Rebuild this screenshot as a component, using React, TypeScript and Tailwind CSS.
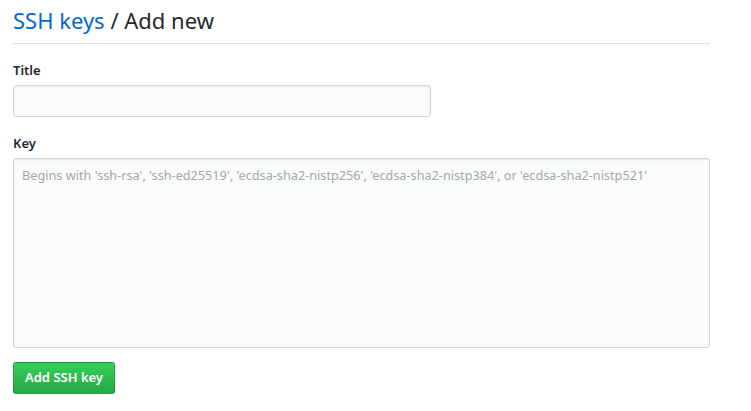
export default function App() {
  return (
    <div className="min-h-[411px] w-[751px] bg-white px-[13px] text-[#24292e]" style={{ fontFamily: '"Noto Sans", "Open Sans", sans-serif' }}>
      <div className="w-[697px]">
        {/* Header */}
        <h2 className="border-b border-[#dfe2e5] pt-[5px] pb-[8px] text-[22px] leading-[30px] font-normal">
          <a href="#" className="text-[#0366d6]">SSH keys</a> / Add new
        </h2>

        <form className="pt-[17px]">
          <div>
            <label htmlFor="title" className="block text-[13px] leading-[18px] font-semibold">Title</label>
            <input
              id="title"
              type="text"
              className="mt-[6px] block h-[32px] w-[418px] rounded-[3px] border border-[#d1d5da] bg-[#fafbfc] px-2 text-[13px] shadow-[inset_0_1px_2px_rgba(27,31,35,0.075)] outline-none"
            />
          </div>

          <div className="mt-[17px]">
            <label htmlFor="key" className="block text-[13px] leading-[18px] font-semibold">Key</label>
            <textarea
              id="key"
              placeholder="Begins with 'ssh-rsa', 'ssh-ed25519', 'ecdsa-sha2-nistp256', 'ecdsa-sha2-nistp384', or 'ecdsa-sha2-nistp521'"
              className="mt-[6px] block h-[190px] w-[697px] resize-none rounded-[3px] border border-[#d1d5da] bg-[#fafbfc] px-2 py-[6px] text-[12.7px] leading-[20px] shadow-[inset_0_1px_2px_rgba(27,31,35,0.075)] outline-none placeholder:text-[#a3a8ae]"
            />
          </div>

          <button
            type="button"
            className="mt-[14px] h-[32px] w-[102px] rounded-[3px] border border-[rgba(27,31,35,0.2)] bg-gradient-to-b from-[#34d058] to-[#28a745] text-[13px] font-semibold text-white"
          >
            Add SSH key
          </button>
        </form>
      </div>
    </div>
  );
}
